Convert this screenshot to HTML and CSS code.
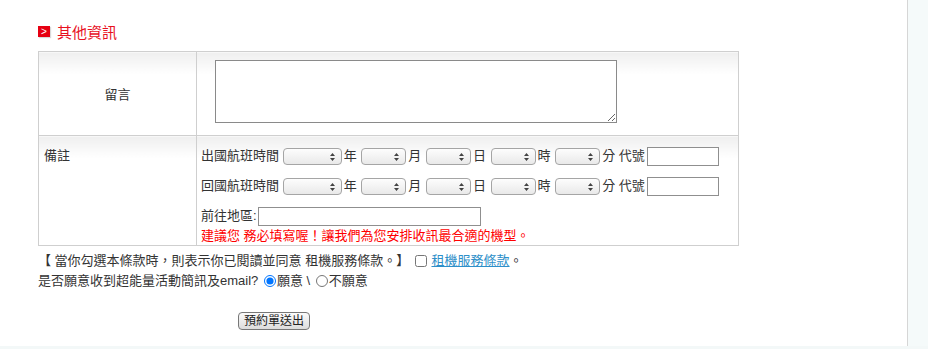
FILE: index.html
```html
<!DOCTYPE html>
<html lang="zh-Hant">
<head>
    <meta charset="UTF-8">
    <meta name="viewport" content="width=device-width, initial-scale=1.0">
    <title>其他資訊</title>
    <link rel="stylesheet" href="styles.css">
</head>
<body>
    <div class="page">
        <div class="main">
            <h2 class="section-title"><span class="title-icon">&gt;</span>其他資訊</h2>

            <table class="info-table">
                <colgroup>
                    <col class="col-label">
                    <col>
                </colgroup>
                <tr class="row-msg">
                    <th>留言</th>
                    <td><textarea class="msg"></textarea></td>
                </tr>
                <tr class="row-note">
                    <th class="left">備註</th>
                    <td>
                        <div class="line">出國航班時間 <select class="sel year"></select>年 <select class="sel"></select>月 <select class="sel"></select>日 <select class="sel"></select>時 <select class="sel"></select>分 代號<input type="text" class="flight"></div>
                        <div class="line">回國航班時間 <select class="sel year"></select>年 <select class="sel"></select>月 <select class="sel"></select>日 <select class="sel"></select>時 <select class="sel"></select>分 代號<input type="text" class="flight"></div>
                        <div class="line last">前往地區:<input type="text" class="area"></div>
                        <div class="hint">建議您 務必填寫喔！讓我們為您安排收訊最合適的機型。</div>
                    </td>
                </tr>
            </table>

            <div class="agree first">【 當你勾選本條款時，則表示你已閱讀並同意 租機服務條款。】 <input type="checkbox" class="chk"> <a href="#">租機服務條款</a>。</div>
            <div class="agree">是否願意收到超能量活動簡訊及email? <input type="radio" name="news" checked>願意 \ <input type="radio" name="news">不願意</div>

            <div class="actions">
                <button type="button" class="submit">預約單送出</button>
            </div>
        </div>
        <div class="side"></div>
    </div>
</body>
</html>
```

FILE: styles.css
```css
body {
    margin: 0;
    background-color: #f3f8f8;
    font-family: "Liberation Sans", "Noto Sans CJK TC", sans-serif;
    font-size: 13px;
    color: #333;
}
.page {
    display: flex;
    height: 346px;
}
.main {
    width: 869px;
    padding-left: 38px;
    background-color: #fff;
    border-right: 1px solid #d6d6d6;
}
.side {
    flex: 1;
    background-color: #f5fafa;
}
.section-title {
    display: flex;
    align-items: center;
    margin: 0;
    padding-top: 22px;
    height: 18px;
    font-size: 15px;
    font-weight: normal;
    color: #e8101e;
}
.title-icon {
    display: inline-block;
    width: 12px;
    height: 11px;
    margin-right: 7px;
    background-color: #e60012;
    color: #fff;
    font-size: 10px;
    line-height: 11px;
    text-align: center;
    box-shadow: 1px 1px 1px rgba(0,0,0,0.15);
}
.info-table {
    margin-top: 11px;
    width: 701px;
    table-layout: fixed;
    border-collapse: collapse;
    border: 1px solid #cfcfcf;
}
.col-label {
    width: 158px;
}
.info-table th, .info-table td {
    border: 1px solid #cfcfcf;
    background: linear-gradient(#efefef, #fff 22px);
    font-weight: normal;
    padding: 0;
}
.info-table th {
    text-align: center;
    vertical-align: middle;
}
.info-table th.left {
    text-align: left;
    vertical-align: top;
    padding: 10px 0 0 5px;
    line-height: 20px;
}
.row-msg {
    height: 84px;
}
.msg {
    display: block;
    box-sizing: border-box;
    width: 402px;
    height: 63px;
    margin: 8px 0 12px 18px;
    border: 1px solid #8a8a8a;
    resize: both;
}
.row-note td {
    padding: 10px 0 1px 4px;
    vertical-align: top;
}
.line {
    line-height: 20px;
    height: 20px;
    margin-bottom: 10px;
    white-space: nowrap;
}
.line.last {
    margin-bottom: 2px;
}
.sel {
    -webkit-appearance: none;
    appearance: none;
    box-sizing: border-box;
    width: 45px;
    height: 17px;
    margin: 0 2px 0 1px;
    vertical-align: middle;
    border: 1px solid #a5a5a5;
    border-radius: 4px;
    background: url("data:image/svg+xml;utf8,<svg xmlns='http://www.w3.org/2000/svg' width='5' height='8'><path d='M0 3 L2.5 0 L5 3 Z M0 5 L2.5 8 L5 5 Z' fill='%23444'/></svg>") no-repeat right 6px center,
                linear-gradient(#fdfdfd, #e9e9e9);
}
.sel.year {
    width: 59px;
    margin-left: 0;
}
.flight {
    box-sizing: border-box;
    width: 72px;
    height: 19px;
    margin: 0 0 0 2px;
    vertical-align: middle;
    border: 1px solid #8f8f8f;
}
.area {
    box-sizing: border-box;
    width: 223px;
    height: 19px;
    margin: 0 0 0 1px;
    vertical-align: middle;
    border: 1px solid #8f8f8f;
}
.hint {
    line-height: 16px;
    color: #ff0000;
}
.agree {
    line-height: 20px;
    white-space: nowrap;
}
.agree.first {
    padding-top: 5px;
}
.agree input {
    margin: 0 1px 0 2px;
    vertical-align: -2px;
    width: 12px;
    height: 12px;
}
.agree a {
    color: #2e8fc9;
    text-decoration: underline;
}
.actions {
    padding: 21px 0 0 200px;
}
.submit {
    height: 18px;
    padding: 0 5px;
    font-family: inherit;
    font-size: 12px;
    line-height: 14px;
    color: #222;
    border: 1px solid #777;
    border-radius: 4px;
    background: linear-gradient(#fbfbfb, #dcdcdc);
    cursor: pointer;
}
```
